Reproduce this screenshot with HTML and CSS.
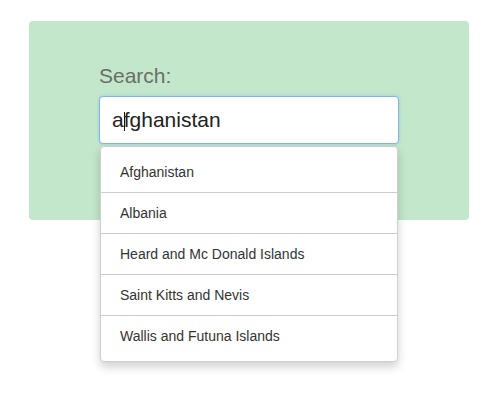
FILE: index.html
```html
<!DOCTYPE html>
<html lang="en">
<head>
<meta charset="utf-8">
<title>Search</title>
<link rel="stylesheet" href="styles.css">
</head>
<body>
  <div class="page">
    <div class="panel">
      <div class="field">
        <label class="label" for="search">Search:</label>
        <div class="combo">
          <div class="input" id="search" role="textbox">a<span class="caret"></span>fghanistan</div>
          <ul class="menu">
            <li class="item">Afghanistan</li>
            <li class="item">Albania</li>
            <li class="item">Heard and Mc Donald Islands</li>
            <li class="item">Saint Kitts and Nevis</li>
            <li class="item">Wallis and Futuna Islands</li>
          </ul>
        </div>
      </div>
    </div>
  </div>
</body>
</html>
```

FILE: styles.css
```css
* { box-sizing: border-box; }
html, body { margin: 0; padding: 0; background: #fff; }
body {
  font-family: "Liberation Sans", Arial, sans-serif;
  color: #333;
}
.page {
  min-height: 400px;
  padding-top: 21px;
}
.panel {
  margin-left: 29px;
  width: 440px;
  height: 199px;
  background: #c3e7cb;
  border-radius: 4px;
  padding: 44px 70px 0 70px;
}
.field {
  display: flex;
  flex-direction: column;
}
.label {
  display: block;
  font-size: 21px;
  line-height: 22px;
  color: #6a6e6a;
  margin-bottom: 9px;
}
.combo {
  position: relative;
}
.input {
  height: 48px;
  border: 1px solid #82b2ea;
  border-radius: 4px;
  background: #fff;
  box-shadow: 0 0 3px rgba(102, 175, 233, 0.55);
  font-size: 21px;
  line-height: 46px;
  padding: 0 12px;
  color: #222;
  white-space: nowrap;
}
.caret {
  display: inline-block;
  width: 1px;
  height: 19px;
  margin-right: -1px;
  background: #111;
  vertical-align: -4px;
}
.menu {
  position: absolute;
  top: 100%;
  left: 1px;
  right: 1px;
  z-index: 2;
  margin: 2px 0 0 0;
  padding: 5px 0;
  list-style: none;
  background: #fff;
  border: 1px solid #cfcfcf;
  border-radius: 4px;
  box-shadow: 0 5px 10px rgba(0, 0, 0, 0.18);
}
.item {
  height: 41px;
  line-height: 40px;
  padding: 0 19px;
  font-size: 14px;
  color: #333;
  border-bottom: 1px solid #cccccc;
}
.item:last-child {
  border-bottom: none;
  height: 40px;
}
```
